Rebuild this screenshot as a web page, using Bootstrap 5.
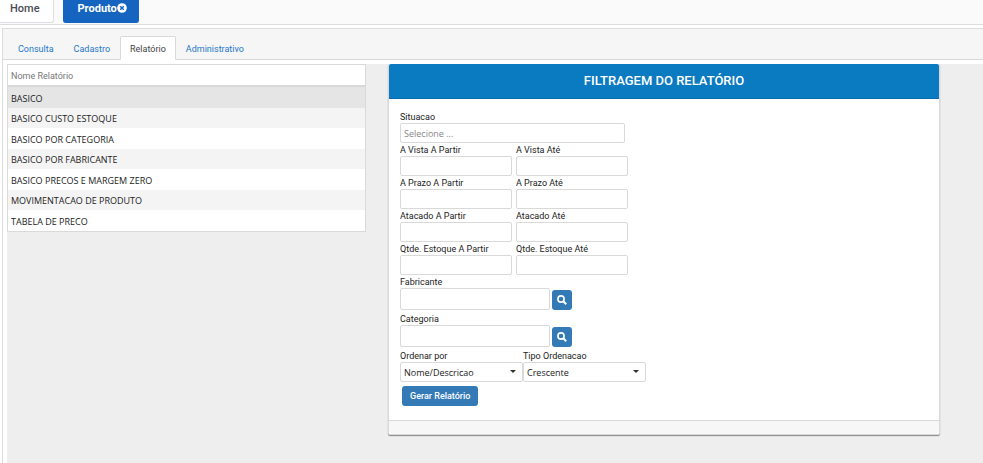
<!DOCTYPE html>
<html lang="pt-BR">
<head>
<meta charset="utf-8">
<meta name="viewport" content="width=device-width, initial-scale=1">
<title>Produto - Relatório</title>
<link href="https://cdn.jsdelivr.net/npm/bootstrap@5.3.0/dist/css/bootstrap.min.css" rel="stylesheet">
<style>
  body { font-family: Roboto, "Liberation Sans", sans-serif; font-size: 9px; line-height: 13px; color: #222; background: #fff; }
  .page-tabs { height: 25px; background: #fafafa; border-bottom: 1px solid #dcdcdf; gap: 9px; }
  .page-tab { height: 23px; padding: 0 13px 6px 10px; font-size: 11px; line-height: 17px; font-weight: 500; color: #4a4d52; background: #fff; border: 1px solid #dcdfe3; border-width: 0 1px 1px 0; border-radius: 0 0 3px 0; }
  .page-tab.current { padding-left: 15px; padding-right: 11px; font-weight: 700; color: #fff; background: #1565c0; border-color: #1565c0; border-radius: 0 0 3px 3px; }
  .workspace { margin: 3px 0 0 2px; border: 1px solid #dcdcdc; border-width: 1px 0 0 1px; }
  .section-tabs { height: 31px; padding: 7px 0 0 5px; background: #f6f6f6; border-bottom: 1px solid #d9d9d9; }
  .section-tabs .nav-link { height: 24px; padding: 5px 9px; color: #1f78c8; border-radius: 2px 2px 0 0; line-height: 14px; }
  .section-tabs .nav-link.active { color: #444; background: #fff; border-color: #d9d9d9 #d9d9d9 #fff; }
  .content-area { margin: 4px 0 0 4px; background: #eee; column-gap: 22px; }
  .report-list { flex: 0 0 37%; max-width: 359px; }
  .report-table { border: 1px solid #d9d9d9; border-collapse: separate; border-spacing: 0; font-family: "Open Sans", "Noto Sans", sans-serif; font-size: 9px; line-height: 12px; background: #fff; }
  .report-table th { height: 22px; padding: 2px 3px 0; font-weight: 400; font-family: Roboto, sans-serif; color: #777; border-bottom: 2px solid #d9d9d9; vertical-align: middle; }
  .report-table td { height: 21px; padding: 2px 3px 0; vertical-align: middle; color: #222; }
  .report-table tr:nth-child(even) td { height: 20px; background: #f4f4f4; }
  .report-table tr.chosen td { background: #e5e5e5; }
  .filter-card { flex: 0 1 552px; border: 1px solid #d9d9d9; border-top: 0; border-radius: 2px; box-shadow: 0 1px 1px #888; }
  .filter-card .card-header { padding: 8px; font-size: 13px; line-height: 18px; font-weight: 500; color: #fff; background: #0a7bc1; border-bottom: 1px solid #0a6cab; border-radius: 2px 2px 0 0; }
  .filter-card .card-body { padding: 11px 11px 14px; }
  .filter-card .card-footer { height: 14px; padding: 0; background: #f7f7f7; border-color: #d9d9d9; }
  .filter-card label { display: block; padding-top: 1px; line-height: 12px; }
  .field { height: 20px; min-height: 0; padding: 1px 3px 0; font-family: "Open Sans", "Noto Sans", sans-serif; font-size: 9px; line-height: 16px; border: 1px solid #d9d9d9; border-radius: 2px; color: #222; }
  .field::placeholder { color: #888; }
  .field-wide { width: 225px; }
  .field-half { width: 112px; }
  .search-row { margin-bottom: 2px; }
  .search-line { gap: 2px; }
  .field-search { width: 150px; height: 22px; }
  .field-select { width: 123px; padding-right: 16px; background-size: 6px 4px; background-position: right 6px top 7px; background-image: url("data:image/svg+xml,%3Csvg xmlns='http://www.w3.org/2000/svg' viewBox='0 0 6 4'%3E%3Cpath fill='%23333' d='M0 0h6L3 3z'/%3E%3C/svg%3E"); }
  .action { background: #337ab7; border: 0; border-radius: 3px; height: 20px; color: #fff; font-size: 9px; line-height: 20px; font-weight: 500; }
  .action-icon { width: 20px; padding: 0; }
  .action-run { margin: 4px 2px 0; }
</style>
<script src="https://cdn.jsdelivr.net/npm/bootstrap@5.3.0/dist/js/bootstrap.bundle.min.js"></script>
</head>
<body class="d-flex flex-column min-vh-100">
<header class="page-tabs d-flex align-items-start">
  <a href="#" class="page-tab text-decoration-none">Home</a>
  <a href="#" class="page-tab current text-decoration-none d-flex align-items-center">Produto<svg width="10" height="10" viewBox="0 0 10 10" aria-hidden="true"><circle cx="5" cy="5" r="4.8" fill="#fff"/><path d="M3.2 3.2l3.6 3.6M6.8 3.2L3.2 6.8" stroke="#1565c0" stroke-width="1.5"/></svg></a>
</header>
<main class="workspace flex-grow-1 d-flex flex-column">
  <nav class="section-tabs nav nav-tabs">
    <a class="nav-link" href="#">Consulta</a>
    <a class="nav-link" href="#">Cadastro</a>
    <a class="nav-link active" href="#" aria-current="page">Relatório</a>
    <a class="nav-link" href="#">Administrativo</a>
  </nav>
  <div class="content-area flex-grow-1 d-flex align-items-start">
    <section class="report-list">
      <table class="report-table w-100">
        <thead><tr><th scope="col">Nome Relatório</th></tr></thead>
        <tbody>
          <tr class="chosen"><td>BASICO</td></tr>
          <tr><td>BASICO CUSTO ESTOQUE</td></tr>
          <tr><td>BASICO POR CATEGORIA</td></tr>
          <tr><td>BASICO POR FABRICANTE</td></tr>
          <tr><td>BASICO PRECOS E MARGEM ZERO</td></tr>
          <tr><td>MOVIMENTACAO DE PRODUTO</td></tr>
          <tr><td>TABELA DE PRECO</td></tr>
        </tbody>
      </table>
    </section>
    <form class="filter-card card">
      <div class="card-header text-center">FILTRAGEM DO RELATÓRIO</div>
      <div class="card-body">
        <div><label for="situacao">Situacao</label><input id="situacao" class="form-control field field-wide" placeholder="Selecione ..."></div>
        <div class="d-flex gap-1">
          <div><label for="vista1">A Vista A Partir</label><input id="vista1" class="form-control field field-half"></div>
          <div><label for="vista2">A Vista Até</label><input id="vista2" class="form-control field field-half"></div>
        </div>
        <div class="d-flex gap-1">
          <div><label for="prazo1">A Prazo A Partir</label><input id="prazo1" class="form-control field field-half"></div>
          <div><label for="prazo2">A Prazo Até</label><input id="prazo2" class="form-control field field-half"></div>
        </div>
        <div class="d-flex gap-1">
          <div><label for="atacado1">Atacado A Partir</label><input id="atacado1" class="form-control field field-half"></div>
          <div><label for="atacado2">Atacado Até</label><input id="atacado2" class="form-control field field-half"></div>
        </div>
        <div class="d-flex gap-1">
          <div><label for="estoque1">Qtde. Estoque A Partir</label><input id="estoque1" class="form-control field field-half"></div>
          <div><label for="estoque2">Qtde. Estoque Até</label><input id="estoque2" class="form-control field field-half"></div>
        </div>
        <div class="search-row">
          <label for="fabricante">Fabricante</label>
          <div class="search-line d-flex align-items-end"><input id="fabricante" class="form-control field field-search">
          <button type="button" class="btn action action-icon d-flex align-items-center justify-content-center" aria-label="Pesquisar fabricante"><svg width="10" height="10" viewBox="0 0 10 10" fill="none" stroke="#fff"><circle cx="4" cy="4" r="3.1" stroke-width="1.6"/><path d="M6.3 6.3L9.2 9.2" stroke-width="2"/></svg></button></div>
        </div>
        <div class="search-row">
          <label for="categoria">Categoria</label>
          <div class="search-line d-flex align-items-end"><input id="categoria" class="form-control field field-search">
          <button type="button" class="btn action action-icon d-flex align-items-center justify-content-center" aria-label="Pesquisar categoria"><svg width="10" height="10" viewBox="0 0 10 10" fill="none" stroke="#fff"><circle cx="4" cy="4" r="3.1" stroke-width="1.6"/><path d="M6.3 6.3L9.2 9.2" stroke-width="2"/></svg></button></div>
        </div>
        <div class="d-flex">
          <div><label for="ordem">Ordenar por</label><select id="ordem" class="form-select field field-select"><option>Nome/Descricao</option></select></div>
          <div><label for="tipo">Tipo Ordenacao</label><select id="tipo" class="form-select field field-select"><option>Crescente</option></select></div>
        </div>
        <button type="button" class="btn action action-run px-2 py-0">Gerar Relatório</button>
      </div>
      <div class="card-footer"></div>
    </form>
  </div>
</main>
</body>
</html>
